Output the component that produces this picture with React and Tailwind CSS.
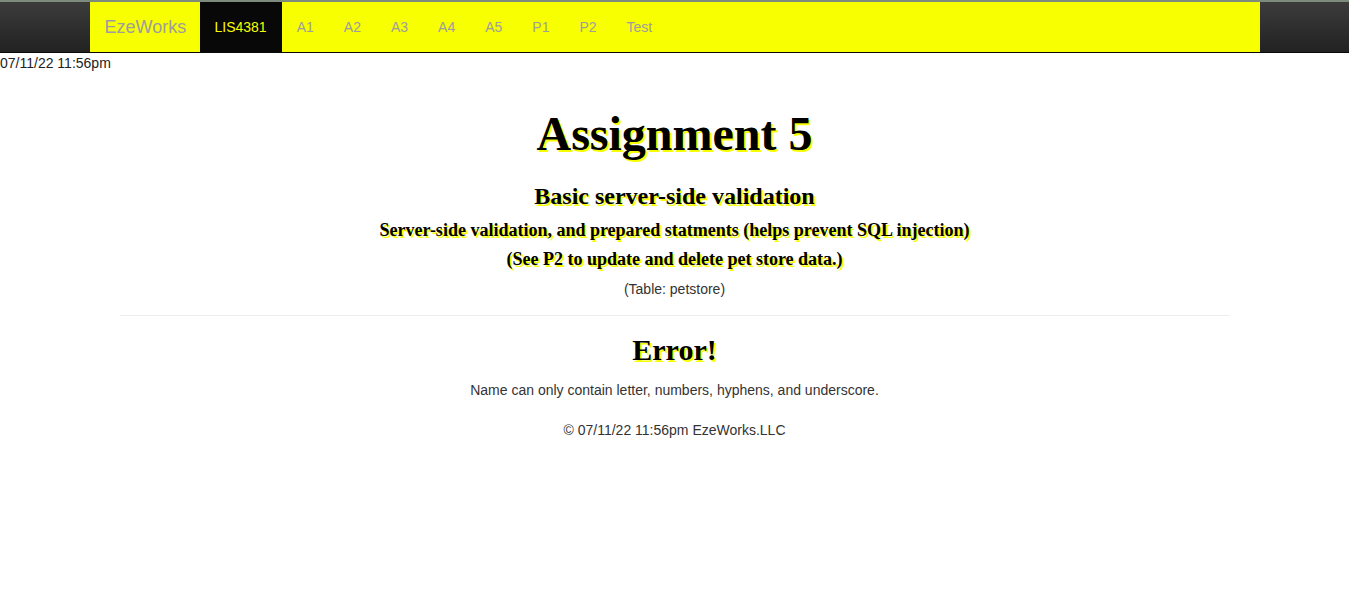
import React from 'react';

const navLinks = ['A1', 'A2', 'A3', 'A4', 'A5', 'P1', 'P2', 'Test'];

const headingShadow = 'font-["Liberation_Serif",serif] font-bold text-black [text-shadow:2px_2px_0_#f8ff00]';

const App = () => {
    return (
        <div className="min-h-screen bg-white font-['Liberation_Sans',Arial,sans-serif] text-[14px] leading-[20px] text-[#333]">
            {/* top strip */}
            <div className="h-[2px] bg-[#7d8b7d]" />

            {/* Navbar */}
            <nav className="h-[51px] border-b border-[#080808] bg-gradient-to-b from-[#3c3c3c] to-[#222]">
                <div className="mx-auto flex h-[50px] w-[1170px] items-stretch bg-[#f8ff00]">
                    <a className="flex w-[110px] items-center px-[15px] text-[18px] text-[#9d9d9d]">EzeWorks</a>
                    <a className="flex items-center bg-[#080808] px-[15px] text-[#f8ff00]">LIS4381</a>
                    {navLinks.map((l) => (
                        <a key={l} className="flex items-center px-[15px] text-[#9d9d9d]">{l}</a>
                    ))}
                </div>
            </nav>

            <div className="text-[#222]">07/11/22 11:56pm</div>

            <div className="flex flex-col items-center text-center">
                <h1 className={`${headingShadow} mt-[34px] text-[48px] leading-[53px]`}>Assignment 5</h1>
                <h3 className={`${headingShadow} mt-[23px] text-[24px] leading-[26px]`}>Basic server-side validation</h3>
                <h4 className={`${headingShadow} mt-[11px] text-[18px] leading-[20px]`}>
                    Server-side validation, and prepared statments (helps prevent SQL injection)
                </h4>
                <h4 className={`${headingShadow} mt-[9px] text-[18px] leading-[20px]`}>
                    (See P2 to update and delete pet store data.)
                </h4>
                <h5 className="mt-[10px] text-[14px] leading-[20px] text-[#333]">(Table: petstore)</h5>
            </div>

            <hr className="mx-auto mt-[16px] w-[1110px] border-t border-[#eee]" />

            <div className="flex flex-col items-center text-center">
                <h2 className={`${headingShadow} mt-[17px] text-[30px] leading-[33px]`}>Error!</h2>
                <p className="mt-[14px]">Name can only contain letter, numbers, hyphens, and underscore.</p>
                <footer className="mt-[20px]">© 07/11/22 11:56pm EzeWorks.LLC</footer>
            </div>
        </div>
    );
};

export default App;
